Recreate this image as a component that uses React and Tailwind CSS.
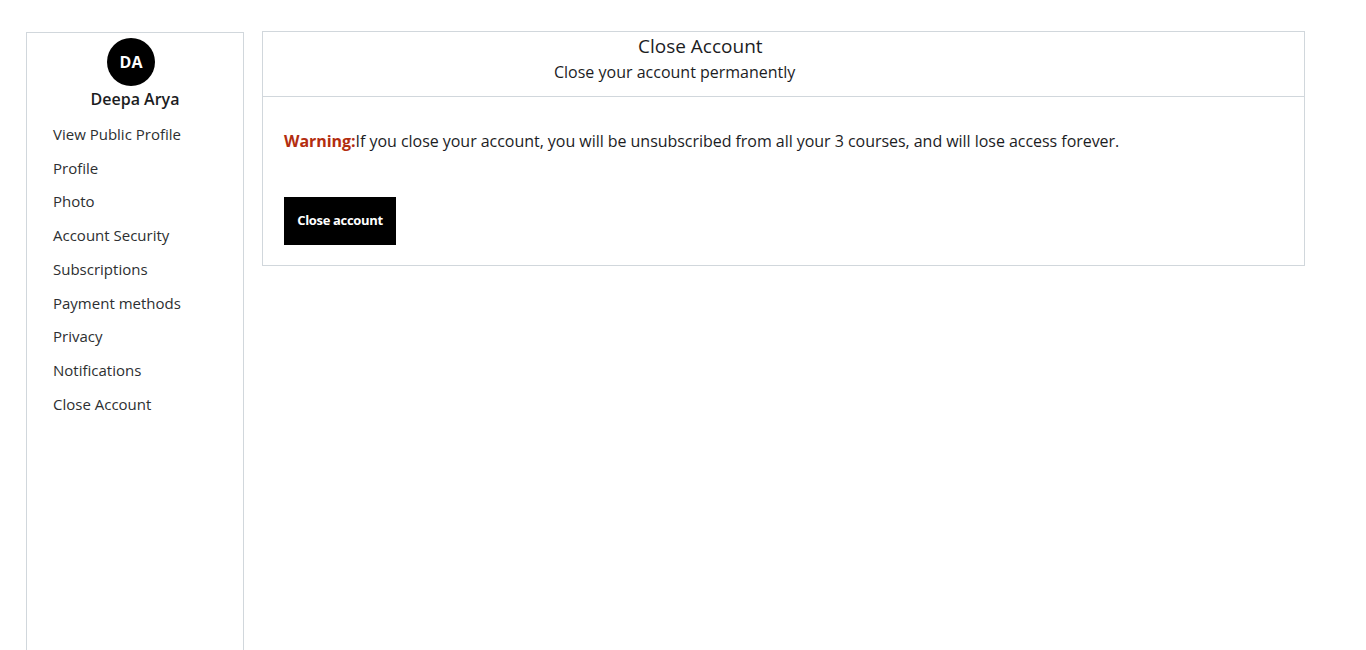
const navItems = [
  'View Public Profile',
  'Profile',
  'Photo',
  'Account Security',
  'Subscriptions',
  'Payment methods',
  'Privacy',
  'Notifications',
  'Close Account',
];

const App = () => {
  return (
    <div className="bg-white text-[#1c1d1f] font-['Open_Sans',sans-serif] pl-[26px] pr-[61px] pt-[31px] pb-[20px] flex gap-[18px] items-start">
      {/* Sidebar */}
      <aside className="w-[218px] shrink-0 h-[700px] mt-px border border-[#d1d7dc] flex flex-col">
        <div className="flex flex-col items-center pt-[5px]">
          <div className="w-12 h-12 mr-[8px] rounded-full bg-black text-white flex items-center justify-center font-bold text-[16px]">
            DA
          </div>
          <p className="font-semibold text-[16px] mt-px leading-6">Deepa Arya</p>
        </div>
        <nav className="flex flex-col pl-[26px] mt-[7px]">
          {navItems.map((item) => (
            <a key={item} href="#" className="text-[15px] leading-[33.7px] text-[#2d2f31]">
              {item}
            </a>
          ))}
        </nav>
      </aside>

      {/* Main card */}
      <main className="flex-1 border border-[#d1d7dc]">
        <div className="h-[65px] border-b border-[#d1d7dc] flex flex-col pt-[2px]">
          <h1 className="text-[19px] leading-6 ml-[375px]">Close Account</h1>
          <p className="text-[16px] leading-6 ml-[291px] mt-[2px] font-medium">Close your account permanently</p>
        </div>
        <div className="px-[21px] pt-[32px] pb-[20px]">
          <p className="text-[16px] leading-6 tracking-[-0.04px]">
            <span className="font-bold text-[#b32d0f]">Warning:</span>If you close your account, you will be unsubscribed from all your 3 courses, and will lose access forever.
          </p>
          <button className="mt-[44px] w-[112px] h-12 bg-black text-white font-bold text-[13px] tracking-tight">
            Close account
          </button>
        </div>
      </main>
    </div>
  );
};

export default App;
